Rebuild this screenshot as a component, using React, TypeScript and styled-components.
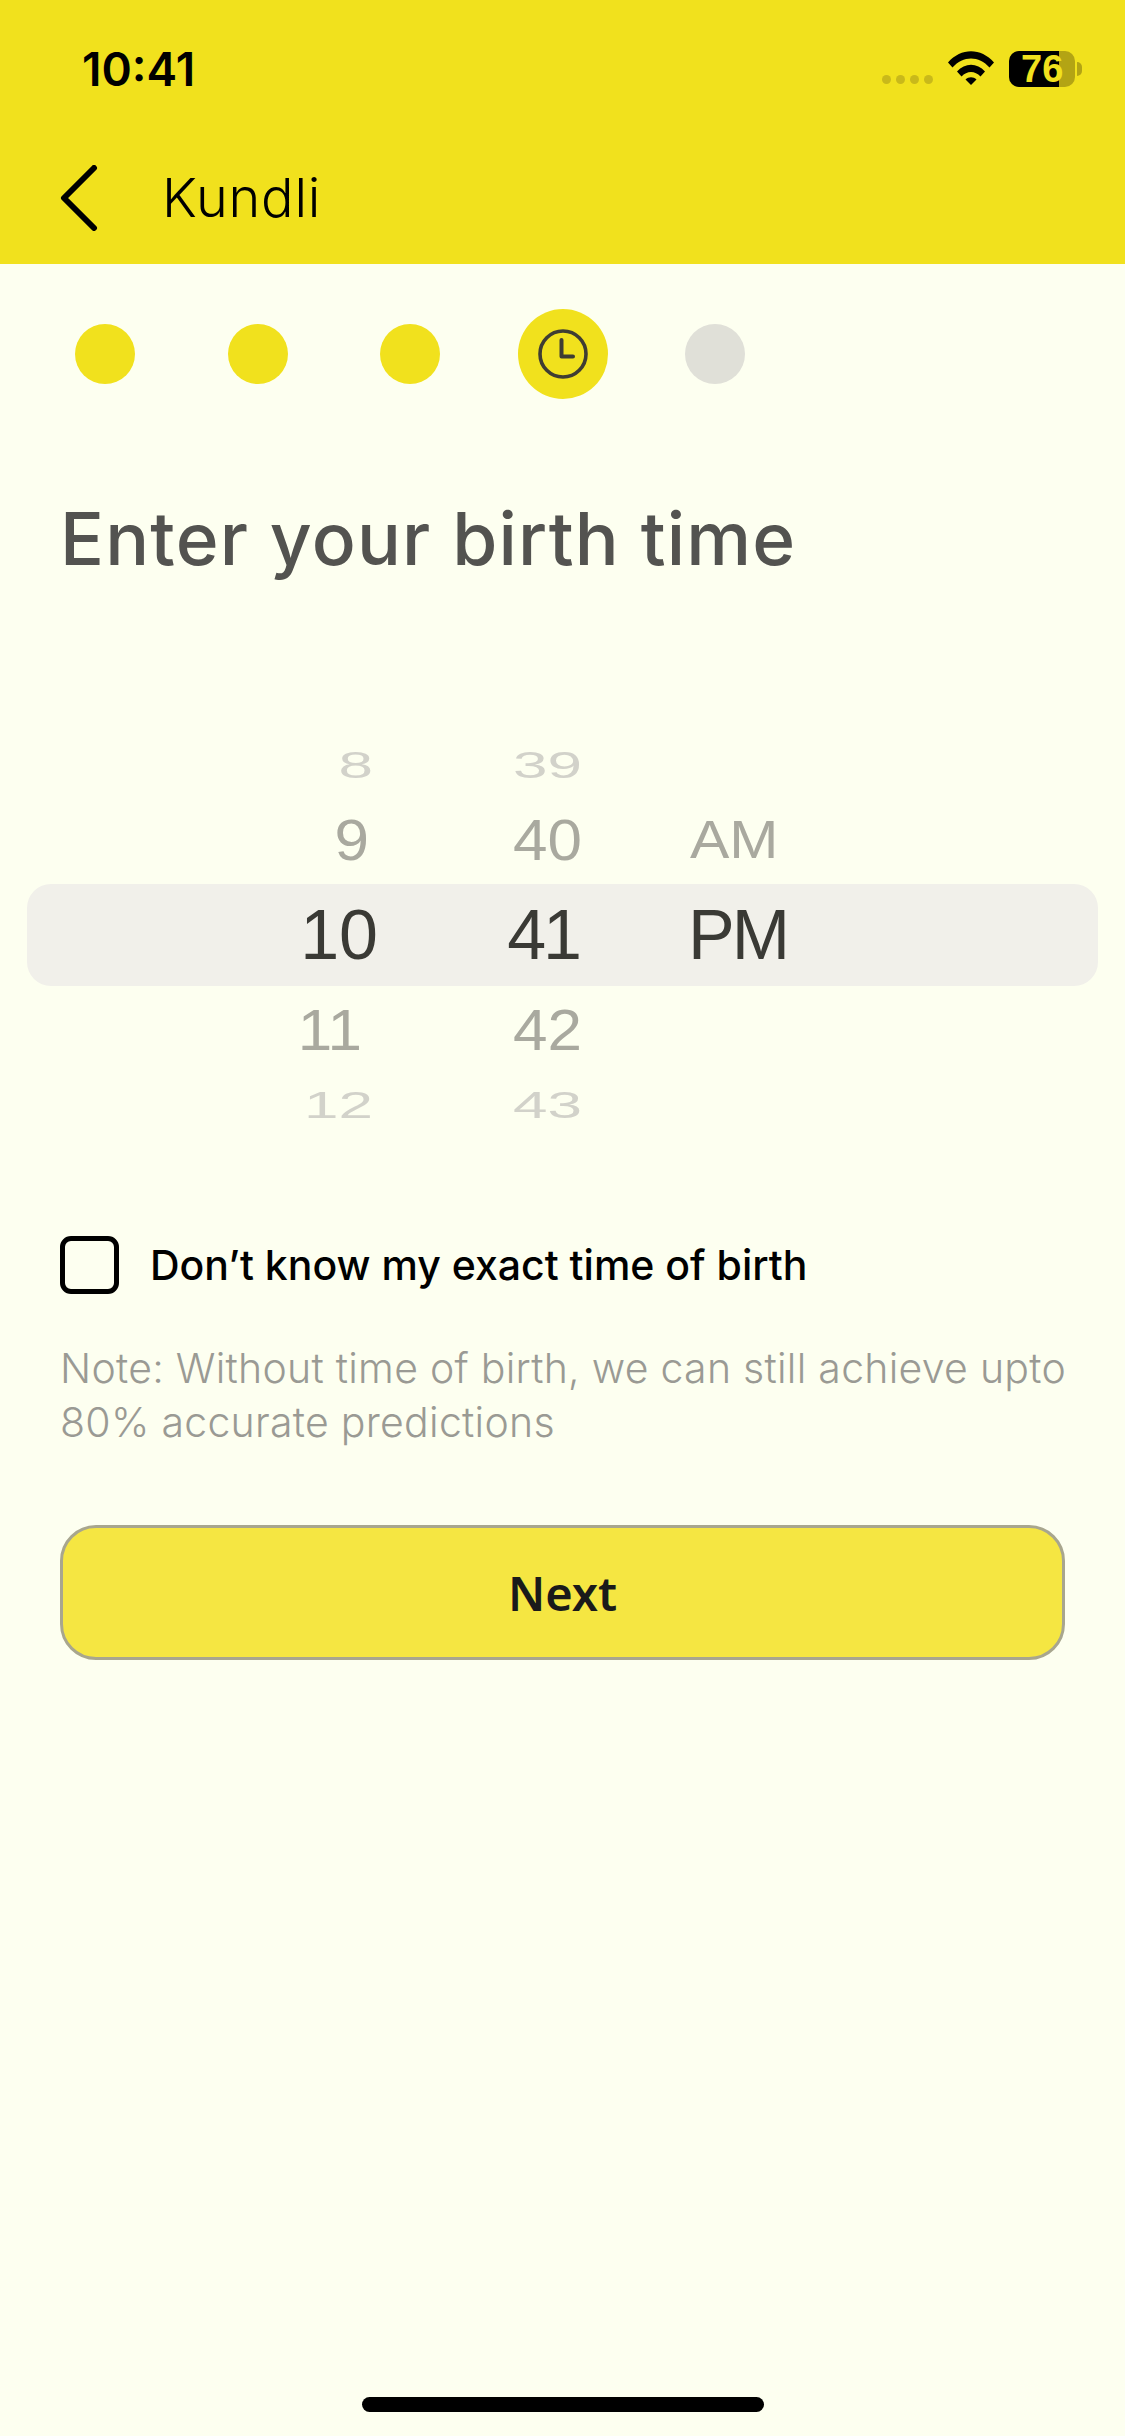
import { createGlobalStyle, styled } from 'styled-components';

const GlobalStyle = createGlobalStyle`
    html, body {
        margin: 0;
        padding: 0;
        background: #fdfff0;
    }
    * {
        box-sizing: border-box;
    }
`;

type WheelRow = {
    hour: string;
    minute: string;
    meridiem?: string;
    hourInset: number;
    tone: 'near' | 'far';
};

const upperRows: WheelRow[] = [
    { hour: '8', minute: '39', hourInset: 5, tone: 'far' },
    { hour: '9', minute: '40', meridiem: 'AM', hourInset: 9, tone: 'near' },
];

const lowerRows: WheelRow[] = [
    { hour: '11', minute: '42', hourInset: 16, tone: 'near' },
    { hour: '12', minute: '43', hourInset: 5, tone: 'far' },
];

function Row({ hour, minute, meridiem, hourInset, tone }: WheelRow) {
    return (
        <PickerRow>
            <HourCell $inset={hourInset} $tone={tone}>{hour}</HourCell>
            <MinuteCell $tone={tone}>{minute}</MinuteCell>
            {meridiem && <MeridiemCell $tone={tone}>{meridiem}</MeridiemCell>}
        </PickerRow>
    );
}

export default function App() {
    return (
        <Page>
            <GlobalStyle />
            <Header>
                <StatusBar>
                    <Clock>10:41</Clock>
                    <StatusIcons>
                        <SignalDots>
                            <SignalDot />
                            <SignalDot />
                            <SignalDot />
                            <SignalDot />
                        </SignalDots>
                        <svg width='46' height='34' viewBox='0 0 46 34'>
                            <path d='M0 11.5 C13 -3.5 33 -3.5 46 11.5 L41.5 16.5 C31 4.5 15 4.5 4.5 16.5 Z' fill='#000' />
                            <path d='M9 20.5 C17 11.5 29 11.5 37 20.5 L32.5 25.5 C27 19.5 19 19.5 13.5 25.5 Z' fill='#000' />
                            <path d='M17.5 28.5 C20.5 25.5 25.5 25.5 28.5 28.5 L23 34 Z' fill='#000' />
                        </svg>
                        <Battery>
                            <BatteryBody>
                                <BatteryFill />
                                <BatteryLabel>76</BatteryLabel>
                            </BatteryBody>
                            <BatteryCap />
                        </Battery>
                    </StatusIcons>
                </StatusBar>
                <NavBar>
                    <svg width='38' height='66' viewBox='0 0 38 66'>
                        <path d='M34 3 L4 33 L34 63' fill='none' stroke='#000' strokeWidth='6' strokeLinecap='round' strokeLinejoin='round' />
                    </svg>
                    <NavTitle>Kundli</NavTitle>
                </NavBar>
            </Header>

            <Steps>
                <StepDot />
                <StepDot />
                <StepDot />
                <ActiveStep>
                    <svg width='50' height='50' viewBox='0 0 50 50'>
                        <circle cx='25' cy='25' r='23' fill='none' stroke='#3f3d33' strokeWidth='3.6' />
                        <path d='M23.5 11 V27.5 H35' fill='none' stroke='#3f3d33' strokeWidth='4' strokeLinecap='round' strokeLinejoin='round' />
                    </svg>
                </ActiveStep>
                <StepDot $pending />
            </Steps>

            <Title>Enter your birth time</Title>

            <Picker>
                {upperRows.map((row) => (
                    <Row key={row.hour} {...row} />
                ))}
                <SelectedRow>
                    <SelectedHour>10</SelectedHour>
                    <SelectedMinute>41</SelectedMinute>
                    <SelectedMeridiem>PM</SelectedMeridiem>
                </SelectedRow>
                {lowerRows.map((row) => (
                    <Row key={row.hour} {...row} />
                ))}
            </Picker>

            <Content>
                <CheckRow>
                    <CheckBox />
                    <CheckLabel>Don’t know my exact time of birth</CheckLabel>
                </CheckRow>
                <Note>
                    Note: Without time of birth, we can still achieve upto
                    <br />
                    80% accurate predictions
                </Note>
                <NextButton>Next</NextButton>
            </Content>

            <HomeIndicator />
        </Page>
    );
}

const Page = styled.div`
    width: 1125px;
    height: 2436px;
    overflow: hidden;
    display: flex;
    flex-direction: column;
    background: #fdfff0;
    font-family: 'Inter', 'Liberation Sans', sans-serif;
`;

const Header = styled.header`
    height: 264px;
    flex-shrink: 0;
    background: #f1e11d;
    display: flex;
    flex-direction: column;
`;

const StatusBar = styled.div`
    height: 140px;
    padding: 42px 43px 0 82px;
    display: flex;
    justify-content: space-between;
    align-items: flex-start;
`;

const Clock = styled.span`
    font-size: 46px;
    line-height: 54px;
    font-weight: 600;
    color: #000;
`;

const StatusIcons = styled.div`
    display: flex;
    align-items: flex-start;
    padding-top: 9px;
    gap: 15px;
`;

const SignalDots = styled.div`
    display: flex;
    gap: 5px;
    padding-top: 24px;
`;

const SignalDot = styled.span`
    width: 9px;
    height: 9px;
    border-radius: 50%;
    background: #c9b91a;
`;

const Battery = styled.div`
    display: flex;
    align-items: center;
    gap: 2px;
`;

const BatteryBody = styled.div`
    position: relative;
    width: 66px;
    height: 36px;
    border-radius: 10px;
    background: #b3a414;
`;

const BatteryFill = styled.div`
    width: 50px;
    height: 100%;
    border-radius: 10px 0 0 10px;
    background: #000;
`;

const BatteryLabel = styled.span`
    position: absolute;
    left: 12px;
    top: 0;
    font-family: 'Liberation Sans', Arial, sans-serif;
    font-size: 38px;
    line-height: 36px;
    font-weight: 700;
    color: #f1e11d;
`;

const BatteryCap = styled.span`
    width: 5px;
    height: 14px;
    border-radius: 0 7px 7px 0;
    background: #b3a414;
`;

const NavBar = styled.div`
    display: flex;
    align-items: center;
    gap: 64px;
    padding: 0 0 0 60px;
    height: 70px;
    margin-top: 23px;
`;

const NavTitle = styled.h1`
    margin: 0;
    font-size: 54px;
    line-height: 70px;
    font-weight: 300;
    letter-spacing: 0.8px;
    color: #000;
`;

const Steps = styled.div`
    display: flex;
    align-items: center;
    gap: 92.5px;
    height: 90px;
    margin-top: 45px;
    padding-left: 75px;
`;

const StepDot = styled.span<{ $pending?: boolean }>`
    width: 60px;
    height: 60px;
    border-radius: 50%;
    background: ${({ $pending }) => ($pending ? '#e0e0d8' : '#f1e11d')};
`;

const ActiveStep = styled.span`
    width: 90px;
    height: 90px;
    margin: 0 -15px;
    border-radius: 50%;
    background: #f1e11d;
    display: flex;
    align-items: center;
    justify-content: center;
`;

const Title = styled.h2`
    margin: 100px 0 0 60px;
    font-size: 73px;
    line-height: 80px;
    font-weight: 500;
    letter-spacing: 1.2px;
    color: #535350;
`;

const Picker = styled.div`
    margin-top: 149px;
    padding: 0 27px;
    display: flex;
    flex-direction: column;
    font-family: 'Liberation Sans', Arial, sans-serif;
`;

const PickerRow = styled.div`
    height: 75px;
    display: grid;
    grid-template-columns: 351px 204px 1fr;
    align-items: center;
`;

const SelectedRow = styled(PickerRow)`
    height: 102px;
    margin: 6px 0 7px;
    background: #f1f0ea;
    border-radius: 24px;
`;

const WheelCell = styled.span<{ $tone: 'near' | 'far' }>`
    font-size: 62px;
    line-height: 75px;
    color: ${({ $tone }) => ($tone === 'far' ? '#d2d2ca' : '#a9a99f')};
    transform: scaleY(${({ $tone }) => ($tone === 'far' ? 0.6 : 0.92)});
`;

const HourCell = styled(WheelCell)<{ $inset: number }>`
    text-align: right;
    padding-right: ${({ $inset }) => $inset}px;
`;

const MinuteCell = styled(WheelCell)`
    text-align: right;
`;

const MeridiemCell = styled(WheelCell)`
    padding-left: 108px;
    font-size: 59px;
`;

const SelectedCell = styled.span`
    font-size: 70px;
    line-height: 100px;
    color: #3a3a35;
`;

const SelectedHour = styled(SelectedCell)`
    text-align: right;
`;

const SelectedMinute = styled(SelectedCell)`
    text-align: right;
    letter-spacing: -3px;
    padding-right: 3px;
`;

const SelectedMeridiem = styled(SelectedCell)`
    padding-left: 106px;
    letter-spacing: -3px;
`;

const Content = styled.div`
    padding: 0 60px;
    margin-top: 93px;
    display: flex;
    flex-direction: column;
`;

const CheckRow = styled.div`
    display: flex;
    align-items: center;
    gap: 31px;
    height: 58px;
`;

const CheckBox = styled.span`
    width: 59px;
    height: 58px;
    border: 5px solid #000;
    border-radius: 11px;
`;

const CheckLabel = styled.span`
    font-size: 41px;
    line-height: 58px;
    font-weight: 500;
    color: #000;
`;

const Note = styled.p`
    margin: 47px 0 0;
    font-size: 41px;
    line-height: 54px;
    font-weight: 300;
    letter-spacing: 0.27px;
    white-space: nowrap;
    color: #9a9a94;
`;

const NextButton = styled.button`
    margin-top: 76px;
    height: 135px;
    width: 100%;
    border: 3px solid #a8a68e;
    border-radius: 36px;
    background: #f5e642;
    font-family: 'Noto Sans', 'Open Sans', sans-serif;
    font-size: 47px;
    font-weight: 600;
    color: #1a1a1a;
`;

const HomeIndicator = styled.div`
    margin: auto auto 24px;
    width: 402px;
    height: 15px;
    border-radius: 7.5px;
    background: #000;
`;
